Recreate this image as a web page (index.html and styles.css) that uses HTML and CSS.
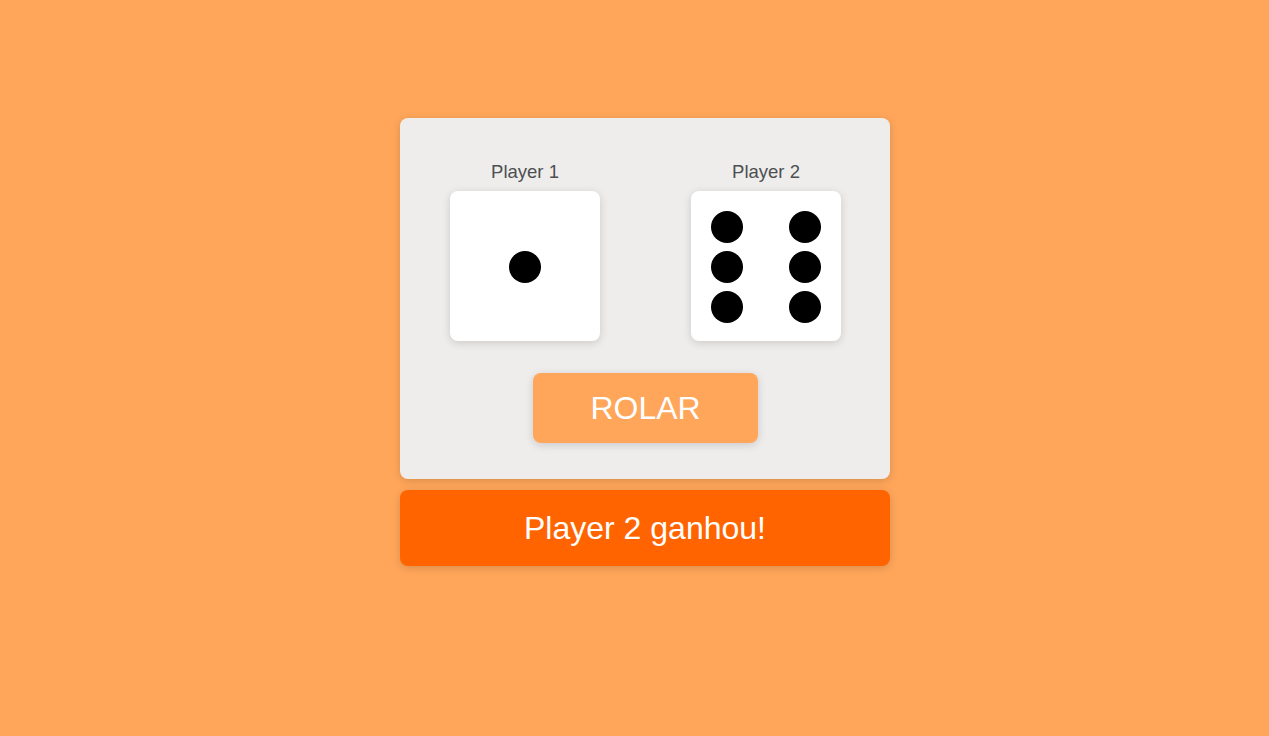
FILE: index.html
```html
<!DOCTYPE html>
<html lang="pt">
<head>
<meta charset="utf-8">
<title>Dados</title>
<link rel="stylesheet" href="styles.css">
</head>
<body>
<main class="game">
  <section class="board">
    <div class="players">
      <div class="player">
        <p class="player-name">Player 1</p>
        <div class="die die-one">
          <span class="pip"></span>
        </div>
      </div>
      <div class="player">
        <p class="player-name">Player 2</p>
        <div class="die die-six">
          <span class="pip"></span><span class="pip"></span>
          <span class="pip"></span><span class="pip"></span>
          <span class="pip"></span><span class="pip"></span>
        </div>
      </div>
    </div>
    <button class="roll-btn">ROLAR</button>
  </section>
  <div class="result">Player 2 ganhou!</div>
</main>
</body>
</html>
```

FILE: styles.css
```css
* { box-sizing: border-box; }
html, body { margin: 0; padding: 0; }
body {
  background: #ffa65a;
  font-family: "Liberation Sans", Arial, sans-serif;
  min-height: 736px;
  padding-left: 21px;
}
.game {
  width: 490px;
  margin: 0 auto;
  padding-top: 118px;
  display: flex;
  flex-direction: column;
  gap: 11px;
}
.board {
  background: #eeedeb;
  border-radius: 8px;
  box-shadow: 0 2px 8px rgba(0,0,0,0.15);
  padding: 43px 49px 36px 50px;
  display: flex;
  flex-direction: column;
  align-items: center;
  gap: 32px;
}
.players {
  width: 100%;
  display: flex;
  justify-content: space-between;
}
.player {
  display: flex;
  flex-direction: column;
  align-items: center;
  gap: 8px;
}
.player-name {
  margin: 0;
  font-size: 18.5px;
  line-height: 22px;
  color: #4d4f52;
}
.die {
  width: 150px;
  height: 150px;
  background: #fff;
  border-radius: 8px;
  box-shadow: 0 2px 8px rgba(0,0,0,0.15);
}
.pip {
  width: 32px;
  height: 32px;
  border-radius: 50%;
  background: #000;
  display: block;
}
.die-one {
  display: flex;
  align-items: center;
  justify-content: center;
}
.die-one .pip { margin-top: 2px; }
.die-six {
  display: grid;
  grid-template-columns: 32px 32px;
  grid-template-rows: repeat(3, 32px);
  column-gap: 46px;
  row-gap: 8px;
  padding: 20px 0 0 20px;
}
.roll-btn {
  width: 225px;
  height: 70px;
  border: none;
  border-radius: 8px;
  background: #ffa65a;
  color: #fff;
  font-family: "Liberation Sans", Arial, sans-serif;
  font-size: 32px;
  box-shadow: 0 2px 8px rgba(0,0,0,0.15);
  padding: 0;
}
.result {
  height: 76px;
  background: #ff6400;
  border-radius: 8px;
  box-shadow: 0 2px 8px rgba(0,0,0,0.15);
  color: #fff;
  font-size: 32px;
  display: flex;
  align-items: center;
  justify-content: center;
}
```
